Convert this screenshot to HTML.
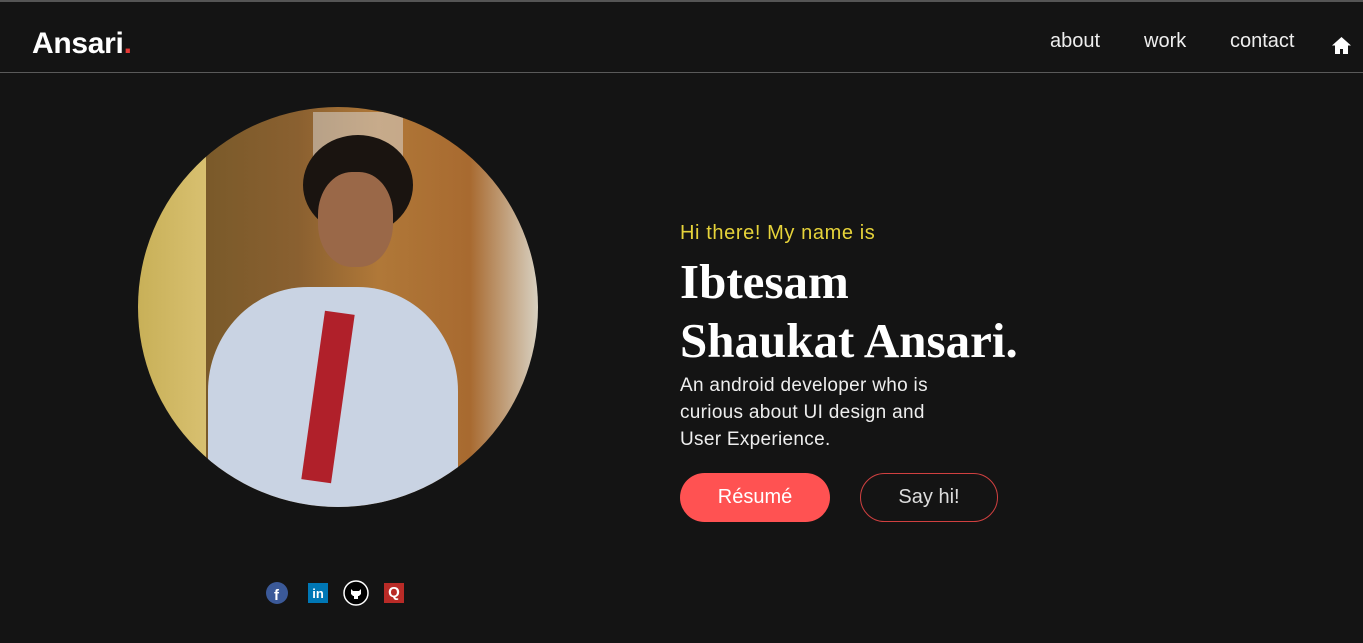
<!DOCTYPE html>
<html><head><meta charset="utf-8"><style>
*{margin:0;padding:0;box-sizing:border-box}
body{width:1363px;height:643px;background:#141414;overflow:hidden;position:relative;font-family:"Liberation Sans",sans-serif;color:#fff}
.top{position:absolute;left:0;top:0;width:1363px;height:2px;background:#555}
.hr{position:absolute;left:0;top:72px;width:1363px;height:1px;background:#5a5a5a}
.logo{position:absolute;left:32px;top:27px;font-size:30px;font-weight:bold;letter-spacing:-0.3px}
.logo span{color:#e53935}
.nav{position:absolute;top:30px;font-size:20px;color:#eee}
.photo{position:absolute;left:138px;top:107px;width:400px;height:400px;border-radius:50%;overflow:hidden;
background:linear-gradient(90deg,#c8b058 0%,#d8c070 17%,#7a5a2a 17%,#8a6030 40%,#b07838 60%,#a86a30 83%,#d8d0c0 100%)}
.hi{position:absolute;left:680px;top:222px;font-size:20px;letter-spacing:0.6px;color:#e6d33a}
.name{position:absolute;left:680px;top:252px;font-family:"Liberation Serif",serif;font-weight:bold;font-size:49px;line-height:59px}
.desc{position:absolute;left:680px;top:372px;font-size:19px;line-height:27px;color:#eee;letter-spacing:0.3px}
.btn{position:absolute;top:473px;height:49px;border-radius:25px;font-size:20px;display:flex;align-items:center;justify-content:center}
</style></head><body>
<div class="top"></div>
<div class="logo">Ansari<span>.</span></div>
<div class="nav" style="left:1050px">about</div>
<div class="nav" style="left:1144px">work</div>
<div class="nav" style="left:1230px">contact</div>
<svg style="position:absolute;left:1332px;top:37px" width="19" height="17" viewBox="0 0 19 17"><path d="M9.5 0L0 8.5h3V17h5v-5h3v5h5V8.5h3z" fill="#fff"/></svg>
<div class="hr"></div>
<div class="photo">
<div style="position:absolute;left:175px;top:5px;width:90px;height:60px;background:#ddd;opacity:.5"></div>
<div style="position:absolute;left:165px;top:28px;width:110px;height:100px;border-radius:50%;background:#1a1410"></div>
<div style="position:absolute;left:180px;top:65px;width:75px;height:95px;border-radius:45%;background:#9a6848"></div>
<div style="position:absolute;left:70px;top:180px;width:250px;height:260px;border-radius:40% 40% 0 0;background:#c9d3e3"></div>
<div style="position:absolute;left:175px;top:205px;width:30px;height:170px;background:#b0202a;transform:rotate(8deg)"></div>
</div>
<div class="hi">Hi there! My name is</div>
<div class="name">Ibtesam<br>Shaukat Ansari.</div>
<div class="desc">An android developer who is<br>curious about UI design and<br>User Experience.</div>
<div class="btn" style="left:680px;width:150px;background:#ff5252">Résumé</div>
<div class="btn" style="left:860px;width:138px;border:1.5px solid #d04040;color:#ddd">Say hi!</div>
<svg style="position:absolute;left:266px;top:582px" width="22" height="22"><circle cx="11" cy="11" r="11" fill="#3b5998"/><text x="8" y="18" font-size="15" font-weight="bold" fill="#fff" font-family="Liberation Sans">f</text></svg>
<div style="position:absolute;left:308px;top:583px;width:20px;height:20px;background:#0077b5;color:#fff;font-size:13px;font-weight:bold;text-align:center;line-height:21px">in</div>
<svg style="position:absolute;left:343px;top:580px" width="26" height="26"><circle cx="13" cy="13" r="12" fill="#000" stroke="#fff" stroke-width="1.5"/><path d="M8 9l2 2h6l2-2v5l-2 2h-1v3h-4v-3h-1l-2-2z" fill="#fff"/></svg>
<div style="position:absolute;left:384px;top:583px;width:20px;height:20px;background:#b92b27;color:#fff;font-size:15px;font-weight:bold;text-align:center;line-height:20px">Q</div>
</body></html>
